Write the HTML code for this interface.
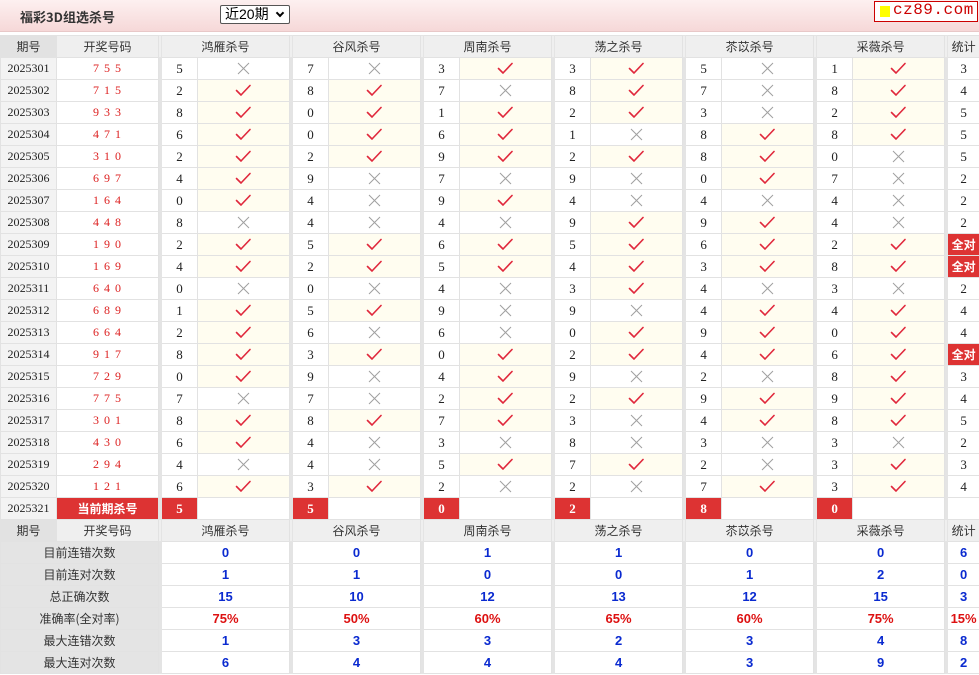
<!DOCTYPE html>
<html><head><meta charset="utf-8">
<style>
body{margin:0;width:979px;height:675px;overflow:hidden;background:#fff;font-family:"Liberation Serif","Noto Sans CJK SC",serif;}
.top{position:absolute;left:0;top:0;width:979px;height:31px;background:linear-gradient(#fdf0f0,#f6d8d8);border-bottom:1px solid #e8c8c8;}
.title{position:absolute;left:20px;top:7px;font:bold 13px "Noto Sans CJK SC",sans-serif;color:#333;}
.sel{position:absolute;left:220px;top:5px;width:70px;height:19px;border:1px solid #555;border-radius:2px;background:#fff;font:14px "Liberation Sans","Noto Sans CJK SC",sans-serif;color:#000;line-height:17px;padding-left:4px;box-sizing:border-box;}
.sel i{position:absolute;right:6px;top:4px;width:4px;height:4px;border-right:2px solid #000;border-bottom:2px solid #000;transform:rotate(45deg);}
.logo{position:absolute;left:874px;top:1px;width:104px;height:21px;border:1px solid #c00;background:#fff;box-sizing:border-box;overflow:hidden;}
.logo b{position:absolute;left:5px;top:4px;width:10px;height:11px;background:#ff0;}
.logo span{position:absolute;left:18px;top:-1px;font:16px "Liberation Mono",monospace;color:#c00;letter-spacing:0.5px;}
table{position:absolute;left:0;top:35px;border-collapse:collapse;table-layout:fixed;width:979px;}
td{border:1px solid #e2e2e2;height:21px;padding:0;text-align:center;font-size:13px;color:#222;overflow:hidden;white-space:nowrap;}
td.s{background:#e4e4e4;border-color:#e4e4e4;}
tr.h td{background:#efefef;font:12px "Noto Sans CJK SC",sans-serif;color:#333;}
tr.h td.p{background:#e2e2e2;}
td.p{background:#f3f3f3;font-size:12px;}
td.d{color:#d22;letter-spacing:1px;font-size:12px;}
td.v{background:#fffdf0;}
td.n{font-size:13px;}
td.r{background:#d33;color:#fff;font:bold 12px "Noto Sans CJK SC",sans-serif;}
td.rn{background:#d33;color:#fff;font-weight:bold;}
td.l{background:#e4e4e4;font:12px "Noto Sans CJK SC",sans-serif;color:#333;}
td.b{color:#0a2ad0;font:bold 13px "Liberation Sans",sans-serif;}
td.red{color:#d11;font:bold 13px "Liberation Sans",sans-serif;}
svg{display:block;margin:0 auto;}
</style></head><body>
<svg width="0" height="0" style="position:absolute"><defs>
<g id="ck"><path d="M1.5 6.5 L6 11 L15 1.5" fill="none" stroke="#e0283c" stroke-width="1.6" stroke-linecap="round" stroke-linejoin="round"/></g>
<g id="cx"><path d="M2 2 L13 13 M13 2 L2 13" fill="none" stroke="#a0a0a0" stroke-width="1"/></g>
</defs></svg>
<div class="top"><div class="title">福彩3D组选杀号</div><div class="sel">近20期<i></i></div><div class="logo"><b></b><span>cz89.com</span></div></div>
<table>
<colgroup><col style="width:56px"><col style="width:102px"><col style="width:3px"><col style="width:36px"><col style="width:92px"><col style="width:3px"><col style="width:36px"><col style="width:92px"><col style="width:3px"><col style="width:36px"><col style="width:92px"><col style="width:3px"><col style="width:36px"><col style="width:92px"><col style="width:3px"><col style="width:36px"><col style="width:92px"><col style="width:3px"><col style="width:36px"><col style="width:92px"><col style="width:3px"><col style="width:32px"></colgroup>
<tr class="h"><td class="p">期号</td><td>开奖号码</td><td class="s"></td><td colspan="2">鸿雁杀号</td><td class="s"></td><td colspan="2">谷风杀号</td><td class="s"></td><td colspan="2">周南杀号</td><td class="s"></td><td colspan="2">荡之杀号</td><td class="s"></td><td colspan="2">苶苡杀号</td><td class="s"></td><td colspan="2">采薇杀号</td><td class="s"></td><td>统计</td></tr>
<tbody id="b">
</tbody>
</table>
<script>
var D=[
["301","755","5x7x3v3v5x1v","3"],["302","715","2v8v7x8v7x8v","4"],["303","933","8v0v1v2v3x2v","5"],["304","471","6v0v6v1x8v8v","5"],["305","310","2v2v9v2v8v0x","5"],["306","697","4v9x7x9x0v7x","2"],["307","164","0v4x9v4x4x4x","2"],["308","448","8x4x4x9v9v4x","2"],["309","190","2v5v6v5v6v2v","A"],["310","169","4v2v5v4v3v8v","A"],["311","640","0x0x4x3v4x3x","2"],["312","689","1v5v9x9x4v4v","4"],["313","664","2v6x6x0v9v0v","4"],["314","917","8v3v0v2v4v6v","A"],["315","729","0v9x4v9x2x8v","3"],["316","775","7x7x2v2v9v9v","4"],["317","301","8v8v7v3x4v8v","5"],["318","430","6v4x3x8x3x3x","2"],["319","294","4x4x5v7v2x3v","3"],["320","121","6v3v2x2x7v3v","4"]];
var h="";
D.forEach(function(r){h+='<tr><td class="p">2025'+r[0]+'</td><td class="d">'+r[1].split("").join(" ")+'</td>';
for(var i=0;i<6;i++){var n=r[2][i*2],m=r[2][i*2+1];h+='<td class="s"></td><td class="n">'+n+'</td>'+(m=="v"?'<td class="v"><svg width="17" height="13"><use href="#ck"/></svg></td>':'<td><svg width="15" height="15"><use href="#cx"/></svg></td>');}
h+='<td class="s"></td>'+(r[3]=="A"?'<td class="r">全对</td>':'<td class="n">'+r[3]+'</td>')+'</tr>';});
h+='<tr><td class="p">2025321</td><td class="r">当前期杀号</td>';
"550280".split("").forEach(function(n){h+='<td class="s"></td><td class="rn">'+n+'</td><td></td>';});
h+='<td class="s"></td><td></td></tr>';
h+='<tr class="h"><td class="p">期号</td><td>开奖号码</td><td class="s"></td><td colspan="2">鸿雁杀号</td><td class="s"></td><td colspan="2">谷风杀号</td><td class="s"></td><td colspan="2">周南杀号</td><td class="s"></td><td colspan="2">荡之杀号</td><td class="s"></td><td colspan="2">苶苡杀号</td><td class="s"></td><td colspan="2">采薇杀号</td><td class="s"></td><td>统计</td></tr>';
var S=[["目前连错次数",["0","0","1","1","0","0","6"]],["目前连对次数",["1","1","0","0","1","2","0"]],["总正确次数",["15","10","12","13","12","15","3"]],["准确率(全对率)",["75%","50%","60%","65%","60%","75%","15%"],1],["最大连错次数",["1","3","3","2","3","4","8"]],["最大连对次数",["6","4","4","4","3","9","2"]]];
S.forEach(function(s){var c=s[2]?"red":"b";h+='<tr><td class="l" colspan="2">'+s[0]+'</td>';for(var i=0;i<6;i++)h+='<td class="s"></td><td colspan="2" class="'+c+'">'+s[1][i]+'</td>';h+='<td class="s"></td><td class="'+c+'">'+s[1][6]+'</td></tr>';});
document.getElementById("b").innerHTML=h;
</script>
</body></html>
